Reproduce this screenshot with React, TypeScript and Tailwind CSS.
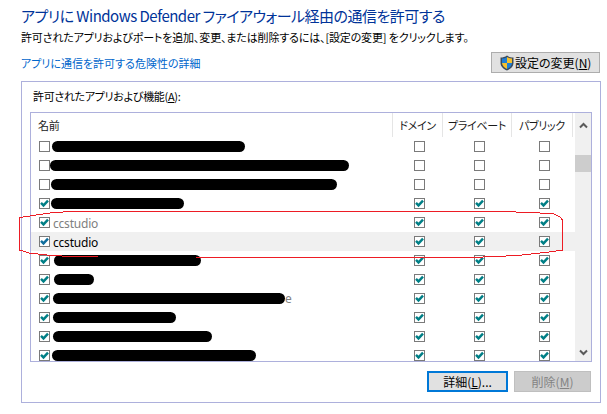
const Check = ({ on, blue }: { on: boolean; blue?: boolean }) => (
  <span className="flex h-[11px] w-[11px] shrink-0 items-center justify-center border border-[#7a7a7a] bg-white">
    {on && (
      <svg width="9" height="9" viewBox="0 0 9 9">
        <path d="M1 3.8 L3.5 6.4 L8 1.6" fill="none" stroke={blue ? "#0f6d9c" : "#007f86"} strokeWidth="2.4" />
      </svg>
    )}
  </span>
);

type Row = { on: boolean; pill?: [number, number]; text?: string; gray?: boolean; hi?: boolean; tail?: string };

const rows: Row[] = [
  { on: false, pill: [52, 193] },
  { on: false, pill: [50, 299] },
  { on: false, pill: [51, 286] },
  { on: true, pill: [51, 133] },
  { on: true, text: "ccstudio", gray: true },
  { on: true, text: "ccstudio", hi: true },
  { on: true, pill: [54, 147] },
  { on: true, pill: [54, 40] },
  { on: true, pill: [53, 232], tail: "e" },
  { on: true, pill: [53, 123] },
  { on: true, pill: [53, 159] },
  { on: true, pill: [52, 204] },
];

const font = "font-['Noto_Sans_CJK_JP','Liberation_Sans',sans-serif] [font-feature-settings:'palt']";

export default function App() {
  return (
    <div className={`relative flex h-[414px] w-[607px] flex-col overflow-hidden bg-white pl-[21px] pr-[7px] ${font}`}>
      <h1 className="mt-[4px] h-[23px] whitespace-nowrap text-[15px] leading-[23px] tracking-[-0.5px] text-[#003399]">
        アプリに Windows Defender ファイアウォール経由の通信を許可する
      </h1>
      <p className="mt-[2px] h-[17px] whitespace-nowrap text-[11px] leading-[17px] tracking-[-0.15px] text-black">
        許可されたアプリおよびポートを追加、変更、または削除するには、[設定の変更] をクリックします。
      </p>
      <div className="mt-[6px] flex h-[21px] items-center justify-between">
        <a className="mt-[1px] text-[11px] text-[#0066cc]">アプリに通信を許可する危険性の詳細</a>
        <button className="flex h-[21px] w-[109px] items-center border border-[#adadad] bg-[#e1e1e1] pl-[8px] text-[12px] text-black">
          <svg width="14" height="16" viewBox="0 0 14 16" className="mr-[1px] shrink-0">
            <path d="M7 0.5 C9 2 11 2.5 13.5 2.5 V8 C13.5 11.5 10.5 14 7 15.5 C3.5 14 0.5 11.5 0.5 8 V2.5 C3 2.5 5 2 7 0.5Z" fill="#3a4a5c" />
            <path d="M7 2 V8 H2 V3.6 C4 3.5 5.5 3 7 2Z" fill="#1f7fd6" />
            <path d="M7 2 C8.5 3 10 3.5 12 3.6 V8 H7Z" fill="#f5c12e" />
            <path d="M2 8 H7 V14 C4.5 13 2.3 11 2 8Z" fill="#f5c12e" />
            <path d="M7 8 H12 C11.7 11 9.5 13 7 14Z" fill="#1f7fd6" />
          </svg>
          <span>
            設定の変更(<span className="underline">N</span>)
          </span>
        </button>
      </div>

      <section className="mt-[8px] flex h-[322px] w-[580px] flex-col border border-[#adb0dc] pl-[8px] pr-[8px]">
        <div className="mt-[6px] h-[17px] whitespace-nowrap pl-[3px] text-[11px] leading-[17px] tracking-[-0.3px] text-black">
          許可されたアプリおよび機能(<span className="underline">A</span>):
        </div>
        <div className="mt-[7px] flex h-[250px] w-[562px] border border-[#adb0dc]">
          <div className="flex w-[544px] flex-col overflow-hidden">
            <div className="flex h-[24px] shrink-0 text-[11px] leading-[24px] tracking-[-0.3px] text-[#1a1a1a]">
              <div className="w-[362px] border-r border-[#e5e5e5] pl-[7px]">名前</div>
              <div className="w-[50px] border-r border-[#e5e5e5] text-center">ドメイン</div>
              <div className="w-[69px] border-r border-[#e5e5e5] text-center">プライベート</div>
              <div className="w-[61px] border-r border-[#e5e5e5] text-center">パブリック</div>
            </div>
            {rows.map((r, i) => (
              <div key={i} className={`flex h-[19px] shrink-0 items-center ${r.hi ? "bg-[#f0f0f0]" : ""}`}>
                <span className="ml-[8px]">
                  <Check on={r.on} blue={r.hi} />
                </span>
                <div className="relative ml-[3px] flex h-[19px] w-[361px] shrink-0 items-center">
                  {r.text && (
                    <span
                      className={`pt-[2px] font-['Noto_Sans',sans-serif] text-[12px] tracking-[-0.2px] ${r.gray ? "text-[#808080]" : "text-black"}`}
                    >
                      {r.text}
                    </span>
                  )}
                  {r.pill && (
                    <span
                      className="absolute top-[4px] h-[11px] rounded-full bg-black"
                      style={{ left: r.pill[0] - 53, width: r.pill[1] }}
                    />
                  )}
                  {r.tail && (
                    <span
                      className="absolute font-['Noto_Sans',sans-serif] text-[12px] text-[#808080]"
                      style={{ left: r.pill![0] - 53 + r.pill![1] }}
                    >
                      {r.tail}
                    </span>
                  )}
                </div>
                <span>
                  <Check on={r.on} />
                </span>
                <span className="ml-[49px]">
                  <Check on={r.on} />
                </span>
                <span className="ml-[54px]">
                  <Check on={r.on} />
                </span>
              </div>
            ))}
          </div>
          <div className="flex w-[16px] flex-col items-center bg-[#f0f0f0] pt-[9px]">
            <svg width="9" height="7" viewBox="0 0 9 7">
              <path d="M1 5.5 L4.5 2 L8 5.5" fill="none" stroke="#5a5a5a" strokeWidth="2" />
            </svg>
            <div className="mt-[26px] h-[17px] w-full bg-[#cdcdcd]" />
            <div className="flex-1" />
            <svg width="9" height="7" viewBox="0 0 9 7" className="mb-[5px]">
              <path d="M1 1.5 L4.5 5 L8 1.5" fill="none" stroke="#5a5a5a" strokeWidth="2" />
            </svg>
          </div>
        </div>
        <div className="mt-[9px] flex w-[561px] justify-end gap-[6px] text-[12px]">
          <button className="h-[21px] w-[81px] border-2 border-[#0078d7] bg-[#e1e1e1] text-black">
            詳細(<span className="underline">L</span>)...
          </button>
          <button className="h-[21px] w-[77px] border border-[#bfbfbf] bg-[#cccccc] text-[#838383]">
            削除(<span className="underline">M</span>)
          </button>
        </div>
      </section>

      <svg className="absolute left-0 top-0" width="607" height="414" viewBox="0 0 607 414" fill="none" shapeRendering="crispEdges">
        <path
          d="M505 211.5 H73 L53 212.5 L20 217.5 L19.5 220 V250 L29 253 L47 255 L62 256 H98 M196 257.5 H472 L518 255.5 L553 251.5 L562.5 250 V220 L560 217 L553 213.5 L527 212.5 L505 211.5"
          stroke="#ed1c24"
          strokeWidth="1"
        />
      </svg>
    </div>
  );
}
